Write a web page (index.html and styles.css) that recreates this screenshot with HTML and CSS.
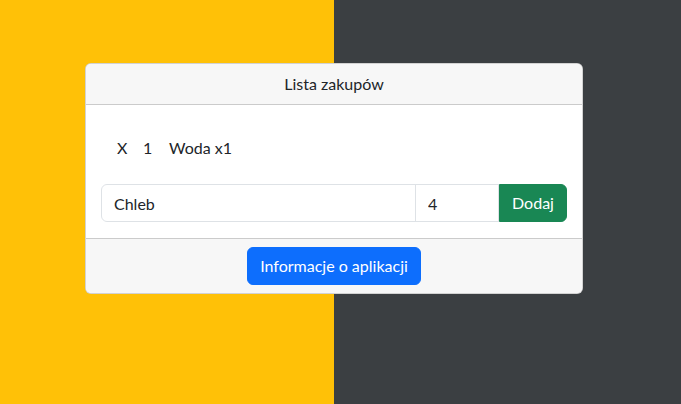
FILE: index.html
```html
<!DOCTYPE html>
<html lang="pl">
<head>
<meta charset="utf-8">
<title>Lista zakupów</title>
<link rel="stylesheet" href="styles.css">
</head>
<body>
<div class="page">
  <div class="card">
    <div class="card-header">Lista zakupów</div>
    <div class="card-body">
      <ul class="items">
        <li class="item"><span class="del">X</span><span class="qty">1</span><span class="name">Woda x1</span></li>
      </ul>
      <div class="input-group">
        <input class="field field-name" type="text" value="Chleb">
        <input class="field field-qty" type="number" value="4">
        <button class="btn btn-add">Dodaj</button>
      </div>
    </div>
    <div class="card-footer">
      <button class="btn btn-info">Informacje o aplikacji</button>
    </div>
  </div>
</div>
</body>
</html>
```
FILE: styles.css
```css
* { box-sizing: border-box; }
html, body { margin: 0; padding: 0; }
body {
  font-family: "Segoe UI", Lato, "Noto Sans", "Liberation Sans", sans-serif;
  font-size: 16px;
  line-height: 24px;
  color: #212529;
}
.page {
  width: 681px;
  height: 404px;
  background: linear-gradient(to right, #ffc107 0, #ffc107 334px, #3b3f42 334px);
  padding: 63px 0 0 85px;
}
.card {
  width: 498px;
  background: #fff;
  border: 1px solid rgba(0,0,0,.175);
  border-radius: 6px;
  overflow: hidden;
}
.card-header {
  background: #f7f7f7;
  border-bottom: 1px solid rgba(0,0,0,.175);
  padding: 8px 16px;
  text-align: center;
}
.card-body {
  padding: 16px 15px;
}
.items {
  list-style: none;
  margin: 0;
  padding: 15px 0 24px 16px;
}
.item {
  display: flex;
  height: 24px;
  align-items: center;
}
.del { width: 26px; }
.qty { width: 26px; }
.input-group {
  display: flex;
  height: 38px;
}
.field {
  font: inherit;
  color: #212529;
  border: 1px solid #dee2e6;
  padding: 6px 12px;
  height: 38px;
  margin: 0;
  background: #fff;
  outline: none;
}
.field-name {
  flex: 1;
  border-radius: 6px 0 0 6px;
}
.field-qty {
  width: 84px;
  margin-left: -1px;
  border-radius: 0;
  -moz-appearance: textfield;
  appearance: textfield;
}
.field-qty::-webkit-inner-spin-button,
.field-qty::-webkit-outer-spin-button { -webkit-appearance: none; margin: 0; }
.btn {
  font: inherit;
  line-height: 24px;
  border: 1px solid transparent;
  padding: 6px 12px;
  color: #fff;
  cursor: pointer;
}
.btn-add {
  background: #198754;
  border-color: #198754;
  border-radius: 0 6px 6px 0;
  width: 68px;
}
.card-footer {
  background: #f7f7f7;
  border-top: 1px solid rgba(0,0,0,.175);
  padding: 8px 16px;
  text-align: center;
}
.btn-info {
  background: #0d6efd;
  border-color: #0d6efd;
  border-radius: 6px;
  height: 38px;
}
```
